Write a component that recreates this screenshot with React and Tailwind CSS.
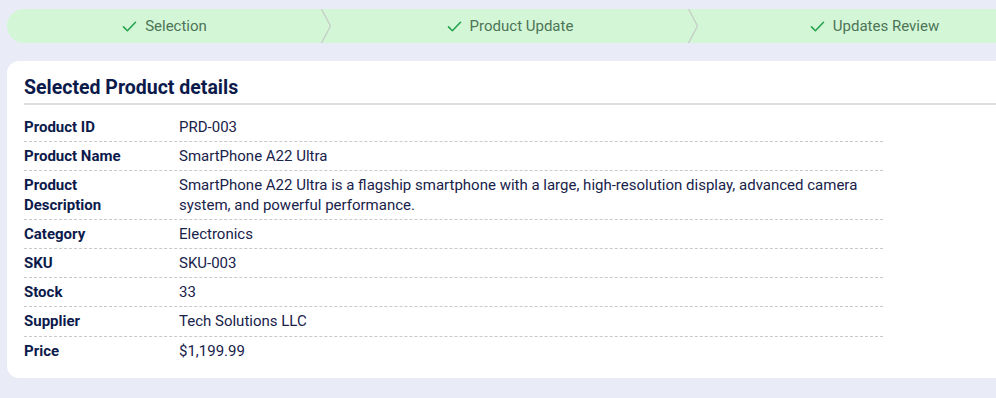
import React from "react";

const rows = [
  ["Product ID", "PRD-003"],
  ["Product Name", "SmartPhone A22 Ultra"],
  ["Product Description", "SmartPhone A22 Ultra is a flagship smartphone with a large, high-resolution display, advanced camera system, and powerful performance."],
  ["Category", "Electronics"],
  ["SKU", "SKU-003"],
  ["Stock", "33"],
  ["Supplier", "Tech Solutions LLC"],
  ["Price", "$1,199.99"],
];

function Check() {
  return (
    <svg width="17" height="17" viewBox="0 0 24 24" fill="none" stroke="#22a24c" strokeWidth="2.2" strokeLinecap="round" strokeLinejoin="round">
      <polyline points="3.5 12.5 9 18 20.5 6" />
    </svg>
  );
}

function Chevron() {
  return (
    <svg width="10" height="34" viewBox="0 0 10 34" className="shrink-0" fill="none">
      <polyline points="0.5 0 9.5 17 0.5 34" stroke="#c6cdc7" strokeWidth="1.3" />
    </svg>
  );
}

function Step({ label, width }) {
  return (
    <div className={`flex items-center justify-center gap-[7px] ${width} shrink-0`}>
      <Check />
      <span className="text-[15px] text-[#4d7457]">{label}</span>
    </div>
  );
}

export default function App() {
  return (
    <div className="w-[996px] h-[398px] overflow-hidden bg-[#e9ebf6] pl-[7px] pt-[9px]" style={{ fontFamily: "Roboto, 'Liberation Sans', sans-serif" }}>
      <div className="flex h-[34px] w-[1100px] bg-[#d3f7d6] rounded-l-full">
        <Step label="Selection" width="w-[314px]" />
        <Chevron />
        <Step label="Product Update" width="w-[357px]" />
        <Chevron />
        <Step label="Updates Review" width="w-[352px]" />
      </div>
      <div className="mt-[18px] w-[1100px] h-[317px] bg-white rounded-xl">
        <div className="ml-[17px] pt-[15px] pb-[4px] border-b-2 border-[#dedede]">
          <h2 className="text-[19.5px] leading-[23px] font-bold text-[#0c1a4b]">Selected Product details</h2>
        </div>
        <div className="ml-[17px] mt-[8px] w-[859px]">
          {rows.map(([k, v], i) => (
            <div key={k} className={`flex text-[15px] leading-[19.2px] pt-[5px] pb-[4px] ${i < rows.length - 1 ? "border-b border-dashed border-[#c9c9c9]" : ""}`}>
              <div className="w-[155px] shrink-0 pr-3 font-bold text-[#0c1a4b]">{k === "Product Description" ? <>Product<br />Description</> : k}</div>
              <div className="flex-1 text-[#18224a]">{v}</div>
            </div>
          ))}
        </div>
      </div>
    </div>
  );
}
